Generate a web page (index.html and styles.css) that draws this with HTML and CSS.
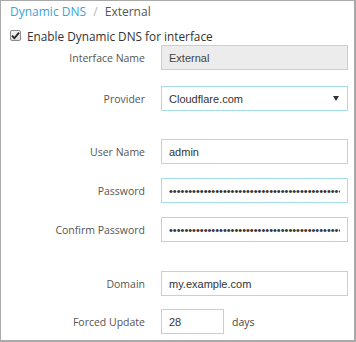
FILE: index.html
```html
<!DOCTYPE html>
<html lang="en">
<head>
    <meta charset="UTF-8">
    <meta name="viewport" content="width=device-width, initial-scale=1.0">
    <title>Dynamic DNS - External</title>
    <link rel="stylesheet" href="styles.css">
</head>
<body>
    <div class="panel">
        <div class="breadcrumb">
            <a href="#">Dynamic DNS</a>
            <span class="sep">/</span>
            <span class="current">External</span>
        </div>

        <label class="enable">
            <span class="checkbox">
                <svg width="9" height="9" viewBox="0 0 9 9"><path d="M1 4.6 L3.4 7.2 L8 1.6" fill="none" stroke="#222" stroke-width="1.8"/></svg>
            </span>
            Enable Dynamic DNS for interface
        </label>

        <form class="ddns-form">
            <div class="row">
                <label>Interface Name</label>
                <input type="text" value="External" disabled>
            </div>
            <div class="row group-gap">
                <label>Provider</label>
                <div class="select">
                    <span>Cloudflare.com</span>
                    <span class="arrow"></span>
                </div>
            </div>

            <div class="row section">
                <label>User Name</label>
                <input type="text" value="admin">
            </div>
            <div class="row">
                <label>Password</label>
                <input type="password" value="passwordpasswordpasswordpasswordpasswordpasswordpassword">
            </div>
            <div class="row">
                <label>Confirm Password</label>
                <input type="password" value="passwordpasswordpasswordpasswordpasswordpasswordpassword">
            </div>

            <div class="row section wide">
                <label>Domain</label>
                <input type="text" value="my.example.com">
            </div>
            <div class="row tight">
                <label>Forced Update</label>
                <div class="inline">
                    <input type="text" class="short" value="28">
                    <span class="unit">days</span>
                </div>
            </div>
        </form>
    </div>
</body>
</html>
```

FILE: styles.css
```css
* {
    box-sizing: border-box;
    margin: 0;
    padding: 0;
}

body {
    font-family: "Open Sans", Arial, sans-serif;
    font-size: 10.5px;
    color: #444;
    background-color: #fff;
}

.panel {
    width: 356px;
    height: 342px;
    border: 1px solid #a9a9a9;
    border-right-width: 2px;
    border-bottom-width: 2px;
}

.breadcrumb {
    padding: 1px 0 0 9px;
    line-height: 20px;
    font-size: 12px;
}

.breadcrumb a {
    color: #3aa3d6;
    text-decoration: none;
}

.breadcrumb .sep {
    color: #b5b5b5;
    margin: 0 4px;
}

.breadcrumb .current {
    color: #555;
}

.enable {
    display: flex;
    align-items: center;
    gap: 6px;
    margin-top: 4px;
    padding-left: 9px;
    height: 19px;
    font-size: 11.8px;
    color: #333;
}

.checkbox {
    width: 11px;
    height: 11px;
    border: 1px solid #8c8c8c;
    border-radius: 2px;
    background: linear-gradient(#f4f4f4, #dcdcdc);
    display: flex;
    align-items: center;
    justify-content: center;
}

.ddns-form {
    padding-left: 9px;
}

.row {
    display: grid;
    grid-template-columns: 135px 187px;
    column-gap: 16px;
    align-items: center;
    height: 25px;
    margin-top: 14px;
}

.row:first-child {
    margin-top: 0;
}

.row.group-gap {
    margin-top: 16px;
}

.row.section {
    margin-top: 28px;
}

.row.section.wide {
    margin-top: 29px;
}

.row.tight {
    margin-top: 13px;
}

.row label {
    text-align: right;
    color: #555;
}

.row input,
.select {
    height: 25px;
    width: 100%;
    border: 1px solid #a5dde9;
    padding: 0 7px;
    font-family: "Liberation Sans", Arial, sans-serif;
    font-size: 11px;
    color: #333;
    background-color: #fff;
    outline: none;
}

.row input:disabled {
    background-color: #ececec;
    color: #444;
}

.select {
    display: flex;
    align-items: center;
    justify-content: space-between;
}

.select .arrow {
    width: 0;
    height: 0;
    border-left: 3px solid transparent;
    border-right: 3px solid transparent;
    border-top: 5px solid #333;
    margin-right: 1px;
}

.inline {
    display: flex;
    align-items: center;
    gap: 8px;
}

.row input.short {
    width: 63px;
}

.unit {
    color: #444;
}
```
